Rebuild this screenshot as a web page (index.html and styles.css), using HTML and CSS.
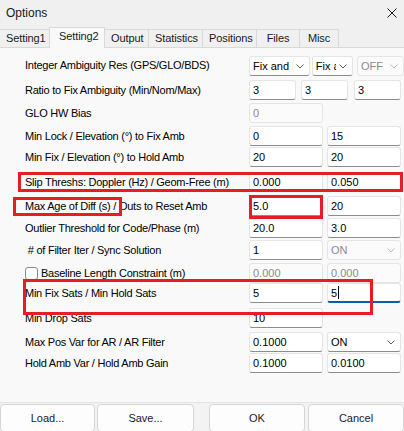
FILE: index.html
```html
<!DOCTYPE html>
<html>
<head>
<meta charset="utf-8">
<link rel="stylesheet" href="styles.css">
</head>
<body>
<div class="window">
  <div class="titlebar">
    <span class="title">Options</span>
    <svg class="close" width="10" height="10" viewBox="0 0 10 10"><path d="M0.5 0.5 L9.5 9.5 M9.5 0.5 L0.5 9.5" stroke="#1a1a1a" stroke-width="1"/></svg>
  </div>
  <div class="tabs">
    <div class="tab">Setting1</div>
    <div class="tab active">Setting2</div>
    <div class="tab">Output</div>
    <div class="tab">Statistics</div>
    <div class="tab">Positions</div>
    <div class="tab">Files</div>
    <div class="tab">Misc</div>
  </div>
  <div class="panel">
    <div class="form">
      <div class="row r1">
        <div class="label">Integer Ambiguity Res (GPS/GLO/BDS)</div>
        <div class="fields sel3">
          <div class="select w62"><span class="val">Fix and Hold</span><svg class="chev" width="8" height="5" viewBox="0 0 8 5"><path d="M0.5 0.5 L4 4 L7.5 0.5" fill="none" stroke="#5f5f5f"/></svg></div>
          <div class="select w42"><span class="val">Fix and Hold</span><svg class="chev" width="8" height="5" viewBox="0 0 8 5"><path d="M0.5 0.5 L4 4 L7.5 0.5" fill="none" stroke="#5f5f5f"/></svg></div>
          <div class="select w45 disabled"><span class="val">OFF</span><svg class="chev" width="8" height="5" viewBox="0 0 8 5"><path d="M0.5 0.5 L4 4 L7.5 0.5" fill="none" stroke="#bdbdbd"/></svg></div>
        </div>
      </div>
      <div class="row r2">
        <div class="label">Ratio to Fix Ambiguity (Min/Nom/Max)</div>
        <div class="fields three">
          <div class="field">3</div>
          <div class="field">3</div>
          <div class="field">3</div>
        </div>
      </div>
      <div class="row r3">
        <div class="label">GLO HW Bias</div>
        <div class="fields two">
          <div class="field disabled">0</div>
        </div>
      </div>
      <div class="row r4">
        <div class="label">Min Lock / Elevation (°) to Fix Amb</div>
        <div class="fields two">
          <div class="field">0</div>
          <div class="field">15</div>
        </div>
      </div>
      <div class="row r5">
        <div class="label">Min Fix / Elevation (°) to Hold Amb</div>
        <div class="fields two">
          <div class="field">20</div>
          <div class="field">20</div>
        </div>
      </div>
      <div class="row r6">
        <div class="label">Slip Threshs: Doppler (Hz) / Geom-Free (m)</div>
        <div class="fields two">
          <div class="field">0.000</div>
          <div class="field">0.050</div>
        </div>
      </div>
      <div class="row r7">
        <div class="label">Max Age of Diff (s) / Outs to Reset Amb</div>
        <div class="fields two">
          <div class="field">5.0</div>
          <div class="field">20</div>
        </div>
      </div>
      <div class="row r8">
        <div class="label">Outlier Threshold for Code/Phase (m)</div>
        <div class="fields two">
          <div class="field">20.0</div>
          <div class="field">3.0</div>
        </div>
      </div>
      <div class="row r9">
        <div class="label">&nbsp;# of Filter Iter / Sync Solution</div>
        <div class="fields two">
          <div class="field">1</div>
          <div class="select disabled"><span class="val">ON</span><svg class="chev" width="8" height="5" viewBox="0 0 8 5"><path d="M0.5 0.5 L4 4 L7.5 0.5" fill="none" stroke="#bdbdbd"/></svg></div>
        </div>
      </div>
      <div class="row r10">
        <div class="label check"><span class="box"></span>Baseline Length Constraint (m)</div>
        <div class="fields two">
          <div class="field disabled">0.000</div>
          <div class="field disabled">0.000</div>
        </div>
      </div>
      <div class="row r11">
        <div class="label">Min Fix Sats / Min Hold Sats</div>
        <div class="fields two">
          <div class="field">5</div>
          <div class="field focus">5<span class="caret"></span></div>
        </div>
      </div>
      <div class="row r12">
        <div class="label">Min Drop Sats</div>
        <div class="fields two">
          <div class="field">10</div>
        </div>
      </div>
      <div class="row r13">
        <div class="label">Max Pos Var for AR / AR Filter</div>
        <div class="fields two">
          <div class="field">0.1000</div>
          <div class="select"><span class="val">ON</span><svg class="chev" width="8" height="5" viewBox="0 0 8 5"><path d="M0.5 0.5 L4 4 L7.5 0.5" fill="none" stroke="#5f5f5f"/></svg></div>
        </div>
      </div>
      <div class="row r14">
        <div class="label">Hold Amb Var / Hold Amb Gain</div>
        <div class="fields two">
          <div class="field">0.1000</div>
          <div class="field">0.0100</div>
        </div>
      </div>
    </div>
    <div class="mark m-slip"></div>
    <div class="mark m-age"></div>
    <div class="mark m-five"></div>
    <div class="mark m-sats"></div>
  </div>
  <div class="footer">
    <div class="group">
      <div class="btn b-load">Load...</div>
      <div class="btn b-save">Save...</div>
    </div>
    <div class="group right">
      <div class="btn b-ok">OK</div>
      <div class="btn b-cancel">Cancel</div>
    </div>
  </div>
</div>
</body>
</html>
```

FILE: styles.css
```css
* { box-sizing: border-box; }
html, body { margin: 0; padding: 0; }
body {
  width: 404px;
  height: 431px;
  overflow: hidden;
  font-family: "Liberation Sans", Arial, sans-serif;
  font-size: 11px;
  color: #000;
  background: #f3f3f3;
}
.window { width: 404px; height: 431px; display: flex; flex-direction: column; overflow: hidden; }

.titlebar {
  height: 27px;
  flex: none;
  display: flex;
  align-items: center;
  justify-content: space-between;
  padding: 0 7px 2px 6px;
  background: #f0f0f0;
}
.title { font-size: 12px; color: #1a1a1a; }
.close { display: block; }

.tabs {
  height: 21px;
  flex: none;
  display: flex;
  align-items: flex-end;
  background: #f0f0f0;
  border-bottom: 1px solid #d9d9d9;
  position: relative;
}
.tab {
  height: 18px;
  padding: 0 6px;
  line-height: 17px;
  border: 1px solid #d9d9d9;
  border-bottom: none;
  margin-left: -1px;
  background: #f0f0f0;
  color: #1a1a1a;
  white-space: nowrap;
  letter-spacing: -0.1px;
}
.tab:first-child { margin-left: 0; border-left: none; width: 50px; }
.tab:nth-child(2) { width: 56px; }
.tab:nth-child(3) { width: 45px; }
.tab:nth-child(4) { width: 55px; }
.tab:nth-child(5) { width: 55px; }
.tab:nth-child(6) { width: 44px; text-align: center; }
.tab:nth-child(7) { width: 40px; text-align: center; }
.tab.active {
  height: 21px;
  line-height: 17px;
  margin-bottom: -1px;
  background: #f9f9f9;
  padding-left: 9px;
}

.panel {
  position: relative;
  height: 355px;
  flex: none;
  background: #f9f9f9;
  border-bottom: 1px solid #e3e3e3;
  padding-top: 7px;
  overflow: hidden;
}
.form { display: flex; flex-direction: column; }
.row {
  display: grid;
  grid-template-columns: 249px 155px;
  align-items: start;
}
.r1 { height: 25px; }
.r2 { height: 23px; }
.r3 { height: 23px; }
.r4 { height: 21px; }
.r5 { height: 25px; }
.r6 { height: 24px; }
.r7 { height: 22px; }
.r8 { height: 22px; }
.r9 { height: 23px; }
.r10 { height: 20px; }
.r11 { height: 25px; }
.r12 { height: 24px; }
.r13 { height: 21px; }
.r14 { height: 22px; }
.r1 .fields { margin-top: 1px; }

.label {
  padding-left: 25px;
  line-height: 20px;
  white-space: nowrap;
  overflow: hidden;
  color: #000;
  letter-spacing: -0.25px;
}
.label.check { display: flex; align-items: center; padding-left: 25px; }
.box {
  width: 13px; height: 13px;
  border: 1px solid #8a8a8a;
  border-radius: 3px;
  background: #fdfdfd;
  margin-right: 3px;
  flex: none;
}

.fields { display: flex; gap: 4px; }
.fields.three { gap: 5px; }
.fields.three .field { width: 47px; }
.fields.three .field:last-child { margin-left: 1px; }
.fields.two > * { width: 74px; }
.fields.sel3 { gap: 2px; }
.fields.sel3 .w45 { margin-left: 2px; }

.field, .select {
  height: 20px;
  background: #fff;
  border: 1px solid #e5e5e5;
  border-bottom-color: #8d8d8d;
  border-radius: 3px;
  padding: 0 3px;
  line-height: 18px;
  white-space: nowrap;
  overflow: hidden;
  color: #000;
}
.field.disabled, .select.disabled {
  background: #fbfbfb;
  border-bottom-color: #e5e5e5;
  color: #8a8a8a;
}
.field.focus {
  border-bottom: 2px solid #005fb8;
}
.caret {
  display: inline-block;
  width: 1px;
  height: 13px;
  background: #000;
  vertical-align: -2px;
  margin-left: 1px;
}
.select {
  display: flex;
  align-items: center;
  justify-content: space-between;
  padding-right: 5px;
}
.select .val { overflow: hidden; white-space: nowrap; flex: 1; min-width: 0; }
.select .chev { flex: none; margin-left: 3px; }
.w62 { width: 62px; }
.w42 { width: 42px; }
.w45 { width: 48px; }

.mark {
  position: absolute;
  border: 3px solid #e81c23;
  pointer-events: none;
}
.m-slip { left: 18px; top: 124px; width: 385px; height: 20px; }
.m-age { left: 13px; top: 149px; width: 109px; height: 19px; }
.m-five { left: 249px; top: 147px; width: 74px; height: 24px; }
.m-sats { left: 23px; top: 231px; width: 350px; height: 36px; }

.footer {
  flex: 1;
  display: flex;
  justify-content: space-between;
  padding-top: 1px;
  background: #f3f3f3;
}
.group { display: flex; gap: 2px; }
.group.right { gap: 3px; }
.btn {
  height: 28px;
  background: #fdfdfd;
  border: 1px solid #d5d5d5;
  border-radius: 4px;
  display: flex;
  align-items: center;
  justify-content: center;
  color: #1a1a1a;
}
.b-load { width: 95px; }
.b-save { width: 97px; }
.b-ok { width: 96px; }
.b-cancel { width: 96px; }
```
